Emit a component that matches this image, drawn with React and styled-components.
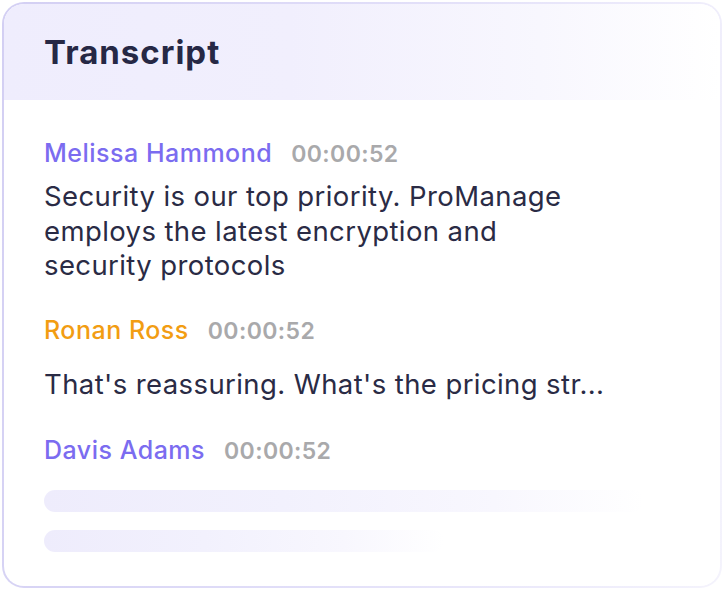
import React from "react";
import styled, { createGlobalStyle } from "styled-components";

const Global = createGlobalStyle`
  html, body { margin: 0; padding: 0; background: #ffffff; }
  body { font-family: Inter, "Noto Sans", sans-serif; }
`;

const Frame = styled.div`
  margin: 2px;
  width: 720px;
  height: 586px;
  box-sizing: border-box;
  padding: 2px;
  border-radius: 22px;
  background: linear-gradient(100deg, #d3cff3 0%, #e0ddf8 45%, #edebfb 80%, #f4f3fc 100%);
`;

const Card = styled.div`
  height: 100%;
  border-radius: 20px;
  background: #ffffff;
  overflow: hidden;
  display: flex;
  flex-direction: column;
`;

const Header = styled.div`
  height: 96px;
  display: flex;
  align-items: center;
  padding-left: 40px;
  background: linear-gradient(90deg, #efedfd 0%, #f1effd 40%, #f8f7fe 75%, #ffffff 100%);
`;

const Title = styled.h1`
  margin: 0;
  font-size: 33px;
  font-weight: 700;
  color: #262845;
  letter-spacing: 1px;
`;

const Body = styled.div`
  display: flex;
  flex-direction: column;
  padding: 38px 0 0 40px;
`;

const Entry = styled.div`
  display: flex;
  flex-direction: column;
  margin-top: ${(p) => p.$top || 0}px;
`;

const NameRow = styled.div`
  display: flex;
  align-items: baseline;
  gap: 19px;
  height: 30px;
  line-height: 30px;
`;

const Name = styled.span`
  font-size: 25px;
  font-weight: 500;
  letter-spacing: 0.5px;
  color: ${(p) => p.$color};
`;

const Time = styled.span`
  font-size: 23px;
  font-weight: 600;
  color: #a9a9ab;
  letter-spacing: 0.4px;
`;

const Text = styled.p`
  margin: ${(p) => p.$gap}px 0 0 0;
  max-width: 540px;
  font-size: 27.5px;
  line-height: 34.5px;
  font-weight: 400;
  letter-spacing: 0.4px;
  color: #2a2b45;
  white-space: ${(p) => (p.$single ? "nowrap" : "normal")};
`;

const Bars = styled.div`
  display: flex;
  flex-direction: column;
  gap: 18px;
  margin-top: 25px;
`;

const Bar = styled.div`
  height: 22px;
  border-radius: 11px;
  width: ${(p) => p.$w}px;
  background: linear-gradient(90deg, #eeecfc 0%, #f2f1fd 40%, #f8f7fe 75%, #ffffff 100%);
`;

export default function App() {
  return (
    <>
      <Global />
      <Frame>
        <Card>
          <Header>
            <Title>Transcript</Title>
          </Header>
          <Body>
            <Entry>
              <NameRow>
                <Name $color="#7b6cf0">Melissa Hammond</Name>
                <Time>00:00:52</Time>
              </NameRow>
              <Text $gap={11}>
                Security is our top priority. ProManage employs the latest encryption and security protocols
              </Text>
            </Entry>
            <Entry $top={32}>
              <NameRow>
                <Name $color="#f29d12">Ronan Ross</Name>
                <Time>00:00:52</Time>
              </NameRow>
              <Text $gap={22} $single>That's reassuring. What's the pricing str...</Text>
            </Entry>
            <Entry $top={34}>
              <NameRow>
                <Name $color="#7b6cf0">Davis Adams</Name>
                <Time>00:00:52</Time>
              </NameRow>
            </Entry>
            <Bars>
              <Bar $w={600} />
              <Bar $w={400} />
            </Bars>
          </Body>
        </Card>
      </Frame>
    </>
  );
}
